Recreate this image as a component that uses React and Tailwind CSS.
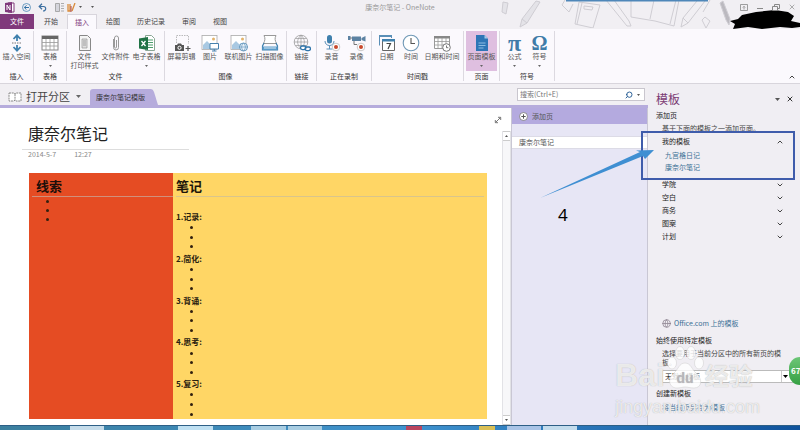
import React from 'react';
import clsx from 'clsx';
import { ChevronDown, ChevronUp, Globe, Search, X } from 'lucide-react';

const TABS = ['开始', '插入', '绘图', '历史记录', '审阅', '视图'];

const GROUPS = [
  { name: '插入', items: [{ label: '插入空间', icon: SpaceIcon, width: 'w-[33px]' }] },
  { name: '表格', items: [{ label: '表格', icon: TableIcon, width: 'w-8', menu: true }] },
  {
    name: '文件',
    pad: 'px-0.5',
    items: [
      { label: '文件\n打印样式', icon: PrintoutIcon, width: 'w-[31px]' },
      { label: '文件附件', icon: ClipIcon, width: 'w-[31px]' },
      { label: '电子表格', icon: ExcelIcon, width: 'w-[31px]', menu: true },
    ],
  },
  {
    name: '图像',
    pad: 'px-px',
    items: [
      { label: '屏幕剪辑', icon: ClippingIcon, width: 'w-[31px]' },
      { label: '图片', icon: PictureIcon, width: 'w-[26px]' },
      { label: '联机图片', icon: OnlinePictureIcon, width: 'w-[31px]' },
      { label: '扫描图像', icon: ScannerIcon, width: 'w-[31px]' },
    ],
  },
  { name: '链接', items: [{ label: '链接', icon: LinkIcon, width: 'w-[29px]' }] },
  {
    name: '正在录制',
    pad: 'px-0.5',
    items: [
      { label: '录音', icon: AudioIcon, width: 'w-[25px]' },
      { label: '录像', icon: VideoIcon, width: 'w-[25px]' },
    ],
  },
  {
    name: '时间戳',
    pad: 'px-0.5',
    items: [
      { label: '日期', icon: DateIcon, width: 'w-[25px]' },
      { label: '时间', icon: TimeIcon, width: 'w-6' },
      { label: '日期和时间', icon: DateTimeIcon, width: 'w-[38px]' },
    ],
  },
  {
    name: '页面',
    pad: 'px-0.5',
    items: [{ label: '页面模板', icon: TemplateIcon, width: 'w-[31px]', menu: true, active: true }],
  },
  {
    name: '符号',
    pad: 'px-0.5',
    items: [
      { label: '公式', icon: PiIcon, width: 'w-[25px]', menu: true },
      { label: '符号', icon: OmegaIcon, width: 'w-[25px]', menu: true },
    ],
  },
];

const NOTES = ['1.记录:', '2.简化:', '3.背诵:', '4.思考:', '5.复习:'];
const CATEGORIES = ['学院', '空白', '商务', '图案', '计划'];

function Svg({ children, className = 'h-[18px] w-[18px]', viewBox = '0 0 18 18' }) {
  return (
    <svg className={className} viewBox={viewBox} fill="none" aria-hidden="true">
      {children}
    </svg>
  );
}

function SpaceIcon() {
  return (
    <Svg>
      <path d="M9 7V1.500M5.500 5L9 1.300 12.500 5M9 11v5.500M5.500 13L9 16.700 12.500 13" stroke="#3f80ad" strokeWidth="1.800" />
      <path d="M4 9h10" stroke="#777" strokeDasharray="1.500 1" />
    </Svg>
  );
}

function TableIcon() {
  return (
    <Svg>
      <rect x="1" y="2" width="16" height="14" fill="#fff" stroke="#888" />
      <path d="M1 2h16v3H1z" fill="#666" />
      <path d="M1 8.500h16M1 12h16M5 5v11M9 5v11M13 5v11" stroke="#999" strokeWidth=".8" />
    </Svg>
  );
}

function PrintoutIcon() {
  return (
    <Svg>
      <path d="M3.500 1.500h8l3 3v12h-11z" fill="#f5f5f5" stroke="#888" />
      <path d="M6 5h5v9H6z" fill="#ddd" stroke="#999" strokeWidth=".7" />
      <path d="M7 7h3M7 9h3M7 11h3" stroke="#888" strokeWidth=".7" />
    </Svg>
  );
}

function ClipIcon() {
  return (
    <Svg>
      <path d="M6.500 5v8.500a2.500 2.500 0 0 0 5 0V4a2 2 0 0 0-4 0v9a1 1 0 0 0 2 0V6" stroke="#999" strokeWidth="1" />
    </Svg>
  );
}

function ExcelIcon() {
  return (
    <Svg>
      <path d="M7.500 1.500h6l3 3v12h-9z" fill="#fff" stroke="#8aa795" />
      <path d="M10 6h5M10 8.500h5M10 11h5M10 13.500h5" stroke="#4c9c6c" />
      <path d="M1 4.500L10 3v13l-9-1.500z" fill="#217346" />
      <path d="M3.500 7l4 5M7.500 7l-4 5" stroke="#fff" strokeWidth="1.300" />
    </Svg>
  );
}

function ClippingIcon() {
  return (
    <Svg>
      <path d="M3.500 9V1.500h12V10" stroke="#aaa" strokeDasharray="1.500 1" strokeWidth=".8" />
      <path d="M2 11h2l1-1.500h3L9 11h2v6H2z" fill="#555" />
      <circle cx="6.500" cy="13.800" r="1.600" stroke="#fff" />
      <path d="M15 12v5M12.500 14.500h5" stroke="#555" strokeWidth="1.200" />
    </Svg>
  );
}

function Photo() {
  return (
    <>
      <rect x="1" y="1.500" width="15" height="14" fill="#fff" stroke="#aaa" strokeWidth=".8" />
      <circle cx="12.500" cy="5" r="1.500" fill="#e3b36b" />
      <path d="M2 15v-4l4-4 3.500 3.500L11 9l4 4v2z" fill="#a9c9e2" />
    </>
  );
}

function PictureIcon() {
  return (
    <Svg>
      <Photo />
      <path d="M9 9.500h8.500V15H9zM11 17h4.500M13.300 15v2" fill="#fff" stroke="#4681ad" />
    </Svg>
  );
}

function OnlinePictureIcon() {
  return (
    <Svg>
      <Photo />
      <circle cx="13.500" cy="13" r="4" fill="#eaf3fa" stroke="#6598be" />
      <path d="M9.500 13h8M13.500 9c-2.500 2.500-2.500 5.500 0 8M13.500 9c2.500 2.500 2.500 5.500 0 8" stroke="#6598be" strokeWidth=".7" />
    </Svg>
  );
}

function ScannerIcon() {
  return (
    <Svg>
      <path d="M3 1.500h12c-1.500 3-1 5 .5 8h-13c1.500-3 2-5 .5-8z" fill="#fff" stroke="#999" />
      <path d="M3 9L1.500 12v4h15v-4L15 9" stroke="#3f80ad" strokeWidth="1.200" />
      <path d="M1.500 12.500h15V16h-15z" fill="#5a9bc9" />
      <path d="M3 14h12" stroke="#d9eaf5" />
    </Svg>
  );
}

function LinkIcon() {
  return (
    <Svg>
      <circle cx="8" cy="8" r="6.800" stroke="#999" strokeWidth=".8" />
      <path d="M1.200 8h13.600M8 1.200v13.600M2.500 4.500h11M2.500 11.500h11M8 1.200c-4.500 4-4.500 9.500 0 13.600M8 1.200c4.500 4 4.500 9.500 0 13.600" stroke="#999" strokeWidth=".7" />
      <rect x="7.500" y="12" width="5.500" height="3.600" rx="1.800" fill="#fff" stroke="#2f75ab" strokeWidth="1.300" />
      <rect x="12" y="13" width="5.500" height="3.600" rx="1.800" stroke="#2f75ab" strokeWidth="1.300" />
    </Svg>
  );
}

function RecordDot() {
  return (
    <>
      <circle cx="13" cy="13" r="3.800" fill="#fff" stroke="#bbb" strokeWidth=".8" />
      <circle cx="13" cy="13" r="2" fill="#c8492c" />
    </>
  );
}

function AudioIcon() {
  return (
    <Svg>
      <rect x="4" y="1" width="5" height="8.500" rx="2.500" fill="#3f80ad" />
      <path d="M2 7c0 6 9 6 9 0M6.500 11.500V15M3.500 15h6" stroke="#5a8fb7" />
      <RecordDot />
    </Svg>
  );
}

function VideoIcon() {
  return (
    <Svg>
      <path d="M0 2h2.500v4H0zM4 2.500h9v4.500H4zM13.500 4L17.500 2v5.500L13.500 6z" fill="#5c82a2" />
      <path d="M2 4h2M6 7v3.500h3" stroke="#777" />
      <RecordDot />
    </Svg>
  );
}

function DateIcon() {
  return (
    <Svg>
      <path d="M1.500 11.500v-10h12V4" stroke="#5a8fb7" />
      <path d="M1 1h13v2H1z" fill="#5a8fb7" />
      <path d="M4.500 5.500h12v11h-12z" fill="#fff" stroke="#666" />
      <path d="M4 5h13v2.500H4z" fill="#3f80ad" />
      <path d="M8.500 9.500h4L10 15" stroke="#444" strokeWidth="1.200" />
    </Svg>
  );
}

function TimeIcon() {
  return (
    <Svg>
      <circle cx="9" cy="9" r="7.800" fill="#fff" stroke="#6f98b6" strokeWidth="1.100" />
      <path d="M9 4v5.500h4" stroke="#555" strokeWidth="1.100" />
    </Svg>
  );
}

function DateTimeIcon() {
  return (
    <Svg>
      <path d="M1.500 2.500h15v12h-15z" fill="#fff" stroke="#999" />
      <path d="M1 2h16v2.500H1z" fill="#888" />
      <path d="M1.500 7.500h15M1.500 11h15M5 4v10.500M9 4v10.500M13 4v10.500" stroke="#999" strokeWidth=".8" />
      <circle cx="13.500" cy="13.500" r="3.800" fill="#fff" stroke="#777" />
      <path d="M13.500 11.500v2.200h1.800" stroke="#555" strokeWidth=".8" />
    </Svg>
  );
}

function TemplateIcon() {
  return (
    <Svg>
      <path d="M3 1h8.500L15 4.500V17H3z" fill="#2e75b6" />
      <path d="M11.500 1v3.500H15z" fill="#a9cbe8" />
      <path d="M5.500 9h7M5.500 11.500h7M5.500 14h5" stroke="#8cbce2" />
    </Svg>
  );
}

function PiIcon() {
  return <span className="font-['Liberation_Serif',serif] text-[24px] leading-[14px] font-bold text-[#3f7ca8]">π</span>;
}

function OmegaIcon() {
  return <span className="font-['Liberation_Serif',serif] text-[20px] leading-[14px] font-bold text-[#3f7ca8]">Ω</span>;
}

function Caret({ className = 'text-[#555]', size = 'h-[3px] w-[5px]' }) {
  return (
    <Svg className={clsx('shrink-0', size, className)} viewBox="0 0 5 3">
      <path d="M0 0h5L2.500 3z" fill="currentColor" />
    </Svg>
  );
}

function Doodles() {
  return (
    <svg className="absolute top-0 right-0 h-7 w-[300px]" viewBox="0 0 300 28" fill="none" stroke="#cfcdd3" aria-hidden="true">
      <path d="M3 2l5 1-2 11-4-2zM36 1l4 1-13 21-7 4 2-8zM22 19l5 4" fill="#e4e3e8" />
      <path d="M62 5l3-5M62 5l7 7 4-8M79 2l21 3-7 23-18-4zM82 3l-5 21M84 6l9 1-1 3-8-1z" />
      <path d="M106 0l21 26 4 0-2-5L114 0M131 0v17l24 4 19 5 5-26M150 19l4-19M176 0l-6 24" />
      <path d="M197 1L183 18l-2 9 7-4 17-22M183 18l5 5M202 20l3-3 5 4-4 7zM210 0l-7 12" />
      <path d="M220 3l3-2 7 18-1 6-3-5z" fill="#bbb9bf" />
      <path d="M66 .5h142" stroke="#4f87b9" strokeWidth="2" />
    </svg>
  );
}

function TitleBar() {
  return (
    <div className="relative flex h-3.5 items-center justify-between">
      <div className="flex w-[100px] items-center gap-[7px] pl-[5px]">
        <Svg className="h-[11px] w-2.5" viewBox="0 0 10 11">
          <path d="M3 1h6v9H3z" fill="#fff" stroke="#80397b" />
          <path d="M0 1l7-1v11l-7-1z" fill="#80397b" />
          <path d="M2 8V3l3 5V3" stroke="#fff" />
        </Svg>
        <Svg className="h-[9px] w-[9px]" viewBox="0 0 9 9">
          <circle cx="4.500" cy="4.500" r="4" stroke="#4a86b4" strokeWidth=".8" />
          <path d="M7 4.500H2.500M4.500 2.300L2.300 4.500l2.200 2.200" stroke="#2f6fa5" />
        </Svg>
        <Svg className="h-[9px] w-[9px]" viewBox="0 0 9 9">
          <path d="M4 .8L1.200 3.500 4 6.200M1.500 3.500h4c3 0 3 4.500-.5 4.500" stroke="#3b6ea0" strokeWidth="1.200" />
        </Svg>
        <Svg className="ml-px h-[9px] w-[9px]" viewBox="0 0 9 9">
          <path d="M.5.500h4v8h-4zM6 .500h3M6 3h3M6 5.500h3M6 8h3" fill="#d5d5dc" stroke="#999" strokeWidth=".8" />
        </Svg>
        <Svg className="-ml-1 h-[9px] w-[9px]" viewBox="0 0 9 9">
          <path d="M1 1v7h2V1M8 0L5 8" stroke="#d98a3a" strokeWidth="1.300" />
          <path d="M4 3v6" stroke="#a44" />
        </Svg>
        <Caret size="h-0.5 w-[3px]" className="-ml-1 text-[#555]" />
        <Caret size="h-0.5 w-[3px]" className="ml-0.5 text-[#555]" />
      </div>
      <h1 className="text-[7px] leading-3 text-[#999]">康奈尔笔记 - OneNote</h1>
      <div className="z-10 flex w-[100px] items-center justify-end gap-2 pr-1">
        <button type="button" aria-label="功能区显示选项">
          <Svg className="h-[7px] w-2" viewBox="0 0 8 7">
            <path d="M.5.500h7v6h-7zM4 5.500v-3M2.800 3.500L4 2.300l1.200 1.200" stroke="#888" strokeWidth=".8" />
          </Svg>
        </button>
        <button type="button" aria-label="最小化">
          <Svg className="h-[7px] w-2" viewBox="0 0 8 7">
            <path d="M1 4.500h6" stroke="#888" />
          </Svg>
        </button>
        <button type="button" aria-label="还原">
          <Svg className="h-[7px] w-2" viewBox="0 0 8 7">
            <path d="M2.500 2V.5h5v4H6M.5 2.500h5v4h-5z" stroke="#888" />
          </Svg>
        </button>
        <button type="button" aria-label="关闭"><X className="h-2 w-2 text-[#888]" /></button>
      </div>
    </div>
  );
}

function RibbonItem({ item }) {
  const ItemIcon = item.icon;
  return (
    <button
      type="button"
      className={clsx('flex h-10 flex-col items-center pt-[3px]', item.width, item.active && 'bg-[#dfbfe0]')}
    >
      <span className="flex h-[18px] items-center justify-center"><ItemIcon /></span>
      <span className="text-[7px] leading-[9px] whitespace-pre text-[#555]">{item.label}</span>
      {item.menu && <Caret size="h-0.5 w-[3px]" className="mt-1 text-[#666]" />}
    </button>
  );
}

function Ribbon() {
  return (
    <div className="flex h-[55px] items-stretch border-b border-[#d8d5dc] bg-[#fbf9fd] py-0.5">
      {GROUPS.map((group) => (
        <section key={group.name} className={clsx('flex flex-col justify-between border-r border-[#dcd9e0]', group.pad)}>
          <div className="flex">
            {group.items.map((item) => <RibbonItem key={item.label} item={item} />)}
          </div>
          <h2 className="text-center text-[7px] leading-[9px] text-[#333]">{group.name}</h2>
        </section>
      ))}
      <button type="button" aria-label="折叠功能区" className="mt-auto mr-1 ml-auto">
        <ChevronUp className="h-2 w-2 text-[#444]" strokeWidth={3} />
      </button>
    </div>
  );
}

function Header() {
  return (
    <header className="relative bg-[#f1eff3]">
      <Doodles />
      <TitleBar />
      <nav className="flex h-[15px] gap-px text-[7px] text-[#444]">
        <button type="button" className="mr-px w-[34px] bg-[#80397b] text-white">文件</button>
        {TABS.map((tab) => (
          <button
            key={tab}
            type="button"
            className={clsx(
              tab === '插入' ? 'border border-b-0 border-[#d8d5dc] bg-[#fbf9fd] px-[7px] text-[#80397b]' : 'px-2',
            )}
          >
            {tab}
          </button>
        ))}
      </nav>
      <svg className="absolute top-2.5 right-0 h-[19px] w-[70px]" viewBox="0 0 70 19" aria-hidden="true">
        <path d="M0 11l8-2 4-4 14-3L45 0l13 2 6 4-3 5 9 2v4l-8 1-12-1-18 2-14-2-15 2 2-5z" fill="#000" />
      </svg>
      <Ribbon />
    </header>
  );
}

function NotebookBar() {
  return (
    <div className="flex h-6 items-end border-b-[3px] border-[#b6acdc] pl-2">
      <button type="button" className="flex h-full items-center gap-1 pt-1 text-[11px] text-[#444]">
        <Svg className="h-2.5 w-3.5" viewBox="0 0 14 10">
          <path d="M1 1h5l1 1 1-1h5v8H8L7 8 6 9H1zM7 2v6" fill="#fff" stroke="#888" strokeDasharray="2 .7" />
        </Svg>
        打开分区
        <Caret className="ml-0.5 text-[#666]" />
      </button>
      <Svg className="ml-[9px] h-4 w-[3px]" viewBox="0 0 3 16">
        <path d="M0 16V3q0-3 3-3v16z" fill="#b6acdc" />
      </Svg>
      <button type="button" className="h-4 bg-[#b6acdc] px-[3px] text-[7px] leading-4 text-[#333]">康奈尔笔记模版</button>
      <Svg className="h-4 w-2.5" viewBox="0 0 10 16">
        <path d="M0 0h3q2 0 3 3l4 13H0z" fill="#b6acdc" />
      </Svg>
      <label className="mr-[3px] mb-1 ml-auto flex h-[13px] w-32 items-center border border-[#c9c6ce] bg-white px-0.5">
        <input
          type="text"
          aria-label="搜索"
          placeholder="搜索(Ctrl+E)"
          className="min-w-0 flex-1 text-[7px] leading-[11px] placeholder:text-[#777]"
        />
        <Search className="h-2 w-2 -scale-x-100 text-[#2f6399]" strokeWidth={3} />
        <Caret size="h-0.5 w-[3px]" className="mr-0.5 ml-1 text-[#555]" />
      </label>
    </div>
  );
}

function Bullets({ className }) {
  return (
    <ul className={className}>
      {[0, 1, 2].map((i) => (
        <li key={i} className="flex flex-1 items-center">
          <span className="h-[3px] w-[3px] rounded-full bg-[#33200f]" />
        </li>
      ))}
    </ul>
  );
}

function Canvas() {
  return (
    <main className="flex min-w-0 flex-1 bg-white">
      <div className="flex min-w-0 flex-1 flex-col">
        <div className="flex justify-between">
          <div className="ml-[22px] w-[167px] pt-[13px]">
            <h2 className="border-b border-[#ddd] pb-1 pl-1.5 text-[16px] leading-6 text-[#222]">康奈尔笔记</h2>
            <p className="flex gap-[18px] pl-1.5 text-[7px] leading-[9px] text-[#888]">
              <span>2014-5-7</span>
              <span>12:27</span>
            </p>
          </div>
          <button type="button" aria-label="全屏" className="mt-2 h-2 w-2">
            <Svg className="h-2 w-2" viewBox="0 0 8 8">
              <path d="M1.500 6.500l5-5M4 1.300h2.700V4M1.300 4v2.700H4" stroke="#777" />
            </Svg>
          </button>
        </div>
        <div className="mt-3.5 mr-[15px] mb-1.5 ml-[29px] flex flex-1">
          <section className="w-36 bg-[#e54c23] pl-[3px]">
            <h3 className="border-b border-[#d0907c] pt-[3px] pl-1 text-[13px] leading-5 font-bold text-[#1c0f0a]">线索</h3>
            <Bullets className="flex h-[27px] flex-col pl-[14px]" />
          </section>
          <section className="flex flex-1 flex-col bg-[#ffd665] px-[3px]">
            <h3 className="mb-[13px] border-b border-[#d9c58c] pt-[3px] text-[13px] leading-5 font-bold text-[#1c150a]">笔记</h3>
            {NOTES.map((note) => (
              <div key={note} className="flex flex-1 flex-col">
                <h4 className="text-[8px] leading-[13px] font-bold text-[#2a2110]">{note}</h4>
                <Bullets className="flex flex-1 flex-col pl-[14px]" />
              </div>
            ))}
          </section>
        </div>
      </div>
      <div className="mt-[23px] flex w-[9px] flex-col justify-between border-x border-[#e2e2e6] bg-[#f7f7f9]">
        <button type="button" aria-label="向上滚动" className="flex h-2.5 items-center justify-center border-y border-[#ccc] bg-white">
          <Caret size="h-0.5 w-[3px]" className="rotate-180 text-[#555]" />
        </button>
        <button type="button" aria-label="向下滚动" className="flex h-2.5 items-center justify-center border-y border-[#ccc] bg-white">
          <Caret size="h-0.5 w-[3px]" />
        </button>
      </div>
    </main>
  );
}

function PageList() {
  return (
    <aside className="w-[137px] border-x border-[#c9c7d4] bg-[#e7e6f5] text-[7px]">
      <button type="button" className="flex h-4 w-full items-center gap-1 bg-[#b4aadf] pl-[7px] text-[#555]">
        <Svg className="h-[9px] w-[9px]" viewBox="0 0 9 9">
          <circle cx="4.500" cy="4.500" r="4" fill="#fff" stroke="#777" strokeWidth=".8" />
          <path d="M2.300 4.500h4.400M4.500 2.300v4.400" stroke="#555" />
        </Svg>
        添加页
      </button>
      <a href="#page" className="mt-3 block h-[13px] border-y border-[#dcdbe6] bg-white pl-[7px] leading-[11px] text-[#555]">康奈尔笔记</a>
    </aside>
  );
}

function CategoryRow({ name, open }) {
  const Chevron = open ? ChevronUp : ChevronDown;
  return (
    <button type="button" aria-expanded={Boolean(open)} className="flex h-[13px] w-full items-center justify-between pr-4 pl-3.5 text-[#222]">
      {name}
      <Chevron className="h-2 w-2 text-[#444]" strokeWidth={3} />
    </button>
  );
}

function Arrow() {
  return (
    <svg className="absolute top-16 -left-[110px] h-[52px] w-[118px]" viewBox="0 0 118 52" aria-hidden="true">
      <path d="M2 50L102 4 98 2.500 116 2 107 11 105 8z" fill="#3f8fd2" />
    </svg>
  );
}

function Watermark() {
  return (
    <div className="pointer-events-none absolute right-[41px] bottom-2 w-[144px] font-['Liberation_Sans',sans-serif] text-white/75 [text-shadow:0_0_1px_#aaa]" aria-hidden="true">
      <div className="flex items-end">
        <span className="text-[32px] leading-8 font-bold">Bai</span>
        <svg className="h-[46px] w-10 shrink-0" viewBox="0 0 40 46" fill="#fff" fillOpacity=".8" stroke="#ccc" strokeWidth=".5">
          <ellipse cx="7" cy="18" rx="4.500" ry="6" />
          <ellipse cx="15" cy="8" rx="4.500" ry="6.500" />
          <ellipse cx="26" cy="8" rx="4.500" ry="6.500" />
          <ellipse cx="34" cy="18" rx="4.500" ry="6" />
          <path d="M20 18c-6 0-7 7-11 10-7 6-5 15 3 15 4 0 5-1 8-1s5 1 9 1c8 0 9-9 2-15-4-3-5-10-11-10z" />
          <text x="20" y="38" textAnchor="middle" fontSize="14" fontWeight="bold" fill="#b5b3b8" stroke="none">du</text>
        </svg>
        <span className="font-['Noto_Sans_CJK_SC',sans-serif] text-[24px] leading-8 font-bold">经验</span>
      </div>
      <div className="mt-1.5 text-[18px] leading-5">jingyan.baidu.com</div>
    </div>
  );
}

function TemplatePane() {
  return (
    <aside className="relative flex w-[152px] flex-col bg-[#f0eef3] pt-[5px] pb-3 text-[7px] text-[#444]">
      <div className="flex h-5 items-center pr-1.5 pl-2">
        <h2 className="flex-1 text-[12px] text-[#7b3a74]">模板</h2>
        <Caret />
        <button type="button" aria-label="关闭窗格" className="ml-1.5"><X className="h-2 w-2 text-[#333]" strokeWidth={3} /></button>
      </div>
      <h3 className="pl-2 leading-[13px] text-[#222]">添加页</h3>
      <p className="pl-3.5 leading-[13px]">基于下面的模板之一添加页面。</p>
      <CategoryRow name="我的模板" open />
      <ul className="pt-px pb-[5px] pl-[17px] leading-3 text-[#3c7196]">
        <li><a href="#grid">九宫格日记</a></li>
        <li><a href="#cornell">康奈尔笔记</a></li>
      </ul>
      {CATEGORIES.map((name) => <CategoryRow key={name} name={name} />)}

      <a href="#office" className="mt-auto mb-1 flex h-[13px] items-center gap-[3px] pl-3.5 text-[#3c7196]">
        <Globe className="h-[9px] w-[9px] text-[#8a7f8c]" />
        Office.com 上的模板
      </a>
      <h3 className="mb-0.5 pl-2 leading-[13px] text-[#222]">始终使用特定模板</h3>
      <label htmlFor="default-template" className="mb-[3px] pr-2.5 pl-3.5 leading-[9px]">选择要用于当前分区中的所有新页的模板。</label>
      <div className="mb-1 ml-3.5 flex h-[13px] items-center border border-[#bbb] bg-white">
        <select id="default-template" className="h-full flex-1 appearance-none pl-0.5 text-[7px] leading-[11px] text-[#222]">
          <option>无默认模板</option>
        </select>
        <span className="flex h-full w-[18px] items-center border-l border-[#ccc] pl-px"><Caret className="text-black" /></span>
      </div>
      <h3 className="pl-2 leading-[13px] text-[#222]">创建新模板</h3>
      <a href="#save" className="mt-px pl-3.5 leading-3 text-[#3c7196]">将当前页另存为模板</a>

      <div className="absolute top-[47px] right-[5px] -left-[7px] h-[49px] border-2 border-[#3f5cab]" />
      <Arrow />
      <span className="absolute top-[121px] -left-[90px] font-['Noto_Sans',sans-serif] text-[17px] leading-5 text-black">4</span>
      <Watermark />
      <div className="absolute right-0 bottom-10 h-7 w-[11px] overflow-hidden rounded-l-full bg-linear-to-b from-[#6cc676] to-[#35a043] pl-0.5 text-[8px] leading-7 font-bold text-white">67</div>
    </aside>
  );
}

function Taskbar() {
  return (
    <footer className="flex h-[5px] border-t border-[#2d5f86] bg-linear-to-r from-[#3c7f9e] via-[#3f93cf] to-[#10539c]">
      <span className="ml-[70px] w-[34px] bg-[#c5dcea]" />
      <span className="ml-[74px] w-[35px] bg-[#bfe0f2]" />
      <span className="ml-[38px] w-[35px] bg-[#a8cde2]" />
      <span className="ml-0.5 w-[34px] bg-[#a8cde2]" />
      <span className="ml-[84px] w-4 bg-[#b9455f]" />
      <span className="ml-[57px] w-4 bg-[#d9bf55]" />
      <span className="ml-3 w-[34px] bg-[#a9c4e6]" />
      <span className="ml-0.5 w-[34px] bg-[#c3dcec]" />
    </footer>
  );
}

export default function App() {
  return (
    <div className="flex min-h-screen flex-col overflow-hidden bg-[#f1eff3] font-['Noto_Sans_CJK_SC',sans-serif]">
      <Header />
      <div className="flex flex-1">
        <div className="flex min-w-0 flex-1 flex-col">
          <NotebookBar />
          <div className="flex flex-1">
            <Canvas />
            <PageList />
          </div>
        </div>
        <TemplatePane />
      </div>
      <Taskbar />
    </div>
  );
}
